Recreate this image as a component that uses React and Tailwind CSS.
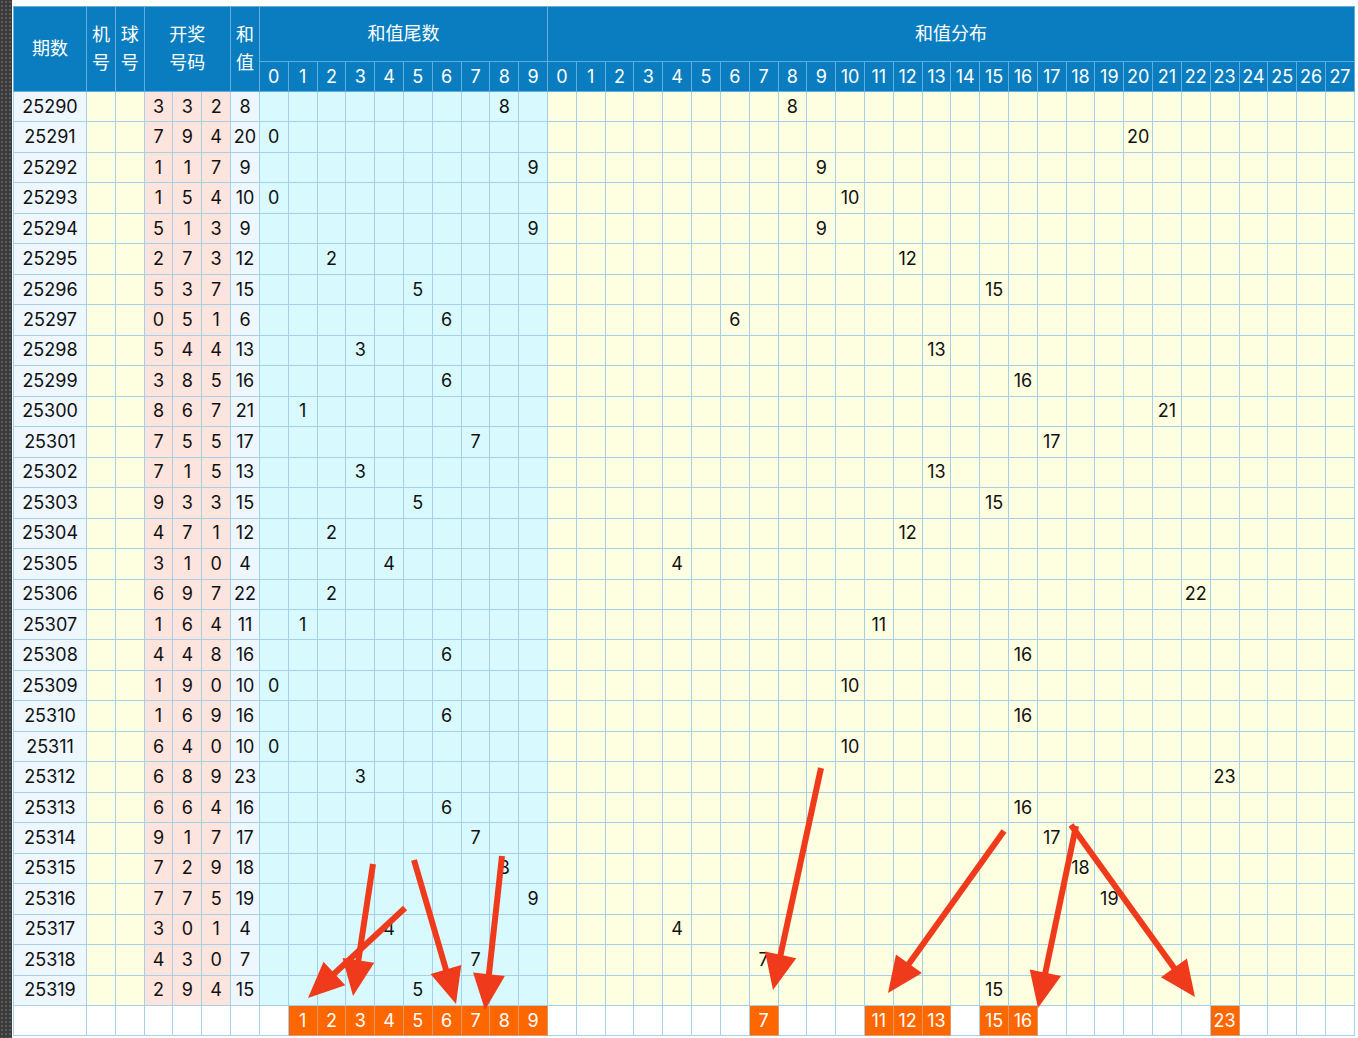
import React from 'react'

// 开奖数据：期号 + 三个开奖号
const DRAWS = [
  ['25290', [3, 3, 2]], ['25291', [7, 9, 4]], ['25292', [1, 1, 7]], ['25293', [1, 5, 4]],
  ['25294', [5, 1, 3]], ['25295', [2, 7, 3]], ['25296', [5, 3, 7]], ['25297', [0, 5, 1]],
  ['25298', [5, 4, 4]], ['25299', [3, 8, 5]], ['25300', [8, 6, 7]], ['25301', [7, 5, 5]],
  ['25302', [7, 1, 5]], ['25303', [9, 3, 3]], ['25304', [4, 7, 1]], ['25305', [3, 1, 0]],
  ['25306', [6, 9, 7]], ['25307', [1, 6, 4]], ['25308', [4, 4, 8]], ['25309', [1, 9, 0]],
  ['25310', [1, 6, 9]], ['25311', [6, 4, 0]], ['25312', [6, 8, 9]], ['25313', [6, 6, 4]],
  ['25314', [9, 1, 7]], ['25315', [7, 2, 9]], ['25316', [7, 7, 5]], ['25317', [3, 0, 1]],
  ['25318', [4, 3, 0]], ['25319', [2, 9, 4]],
]

const PICK_TAIL = [1, 2, 3, 4, 5, 6, 7, 8, 9]
const PICK_SUM = [7, 11, 12, 13, 15, 16, 23]

const TAILS = Array.from({ length: 10 }, (_, i) => i)
const SUMS = Array.from({ length: 28 }, (_, i) => i)

// 箭头（起点 → 箭尖）
const ARROWS = [
  [405, 908, 308, 998],
  [373, 864, 353, 996],
  [414, 860, 456, 1004],
  [502, 856, 485, 1010],
  [821, 768, 773, 990],
  [1004, 831, 888, 993],
  [1076, 826, 1038, 1008],
  [1071, 825, 1195, 997],
]

const td = 'border border-[#a6cfea] p-0 text-center align-middle'
const th = 'border border-[#5eaee0] p-0 text-center align-middle font-normal'

function Arrow({ x1, y1, x2, y2 }) {
  const dx = x2 - x1, dy = y2 - y1
  const len = Math.hypot(dx, dy)
  const ux = dx / len, uy = dy / len
  const hl = 36, hw = 16
  const bx = x2 - ux * hl, by = y2 - uy * hl
  const pts = `${x2},${y2} ${bx - uy * hw},${by + ux * hw} ${bx + uy * hw},${by - ux * hw}`
  return (
    <g>
      <line x1={x1} y1={y1} x2={bx + ux * 4} y2={by + uy * 4} stroke="#ef3a1b" strokeWidth="6" />
      <polygon points={pts} fill="#ef3a1b" />
    </g>
  )
}

export default function App() {
  return (
    <div className="relative flex h-[1038px] w-[1358px] overflow-hidden bg-white text-[18px] text-[#111]"
      style={{ fontFamily: "Inter, 'Noto Sans CJK SC', sans-serif" }}>
      <div className="w-[12px] shrink-0 bg-[#3b3b3b] bg-[radial-gradient(#5a5a5a_1px,transparent_1px)] bg-[length:4px_4px]" />
      <div className="pl-[1px] pt-[6px]">
        <table className="w-[1342px] table-fixed border-collapse leading-none">
          <colgroup>
            <col className="w-[73px]" />
            {Array.from({ length: 44 }, (_, i) => <col key={i} />)}
          </colgroup>
          <thead className="bg-[#0a7dc0] text-white">
            <tr className="h-[55px]">
              <th rowSpan={2} className={th}>期数</th>
              <th rowSpan={2} className={th}><div className="leading-[28px]">机<br />号</div></th>
              <th rowSpan={2} className={th}><div className="leading-[28px]">球<br />号</div></th>
              <th rowSpan={2} colSpan={3} className={th}><div className="leading-[28px]">开奖<br />号码</div></th>
              <th rowSpan={2} className={th}><div className="leading-[28px]">和<br />值</div></th>
              <th colSpan={10} className={th}>和值尾数</th>
              <th colSpan={28} className={th}>和值分布</th>
            </tr>
            <tr className="h-[30px]">
              {TAILS.map((n) => <th key={'t' + n} className={th}>{n}</th>)}
              {SUMS.map((n) => <th key={'s' + n} className={th}>{n}</th>)}
            </tr>
          </thead>
          <tbody>
            {DRAWS.map(([issue, nums]) => {
              const sum = nums[0] + nums[1] + nums[2]
              return (
                <tr key={issue} className="h-[30.47px]">
                  <td className={`${td} bg-[#eef6fe]`}>{issue}</td>
                  <td className={`${td} bg-[#fefee1]`} />
                  <td className={`${td} bg-[#fefee1]`} />
                  {nums.map((n, i) => <td key={i} className={`${td} bg-[#fde4dd]`}>{n}</td>)}
                  <td className={`${td} bg-[#eef6fe]`}>{sum}</td>
                  {TAILS.map((n) => (
                    <td key={'t' + n} className={`${td} bg-[#d8fafe]`}>{sum % 10 === n ? n : ''}</td>
                  ))}
                  {SUMS.map((n) => (
                    <td key={'s' + n} className={`${td} bg-[#fefee1]`}>{sum === n ? n : ''}</td>
                  ))}
                </tr>
              )
            })}
            <tr className="h-[30px]">
              {Array.from({ length: 7 }, (_, i) => <td key={i} className={`${td} bg-white`} />)}
              {TAILS.map((n) => PICK_TAIL.includes(n)
                ? <td key={'t' + n} className="border border-[#d99a70] bg-[#fe6700] p-0 text-center text-white">{n}</td>
                : <td key={'t' + n} className={`${td} bg-white`} />)}
              {SUMS.map((n) => PICK_SUM.includes(n)
                ? <td key={'s' + n} className="border border-[#d99a70] bg-[#fe6700] p-0 text-center text-white">{n}</td>
                : <td key={'s' + n} className={`${td} bg-white`} />)}
            </tr>
          </tbody>
        </table>
      </div>
      <svg className="pointer-events-none absolute left-0 top-0" width="1358" height="1038">
        {ARROWS.map(([x1, y1, x2, y2], i) => <Arrow key={i} x1={x1} y1={y1} x2={x2} y2={y2} />)}
      </svg>
    </div>
  )
}
